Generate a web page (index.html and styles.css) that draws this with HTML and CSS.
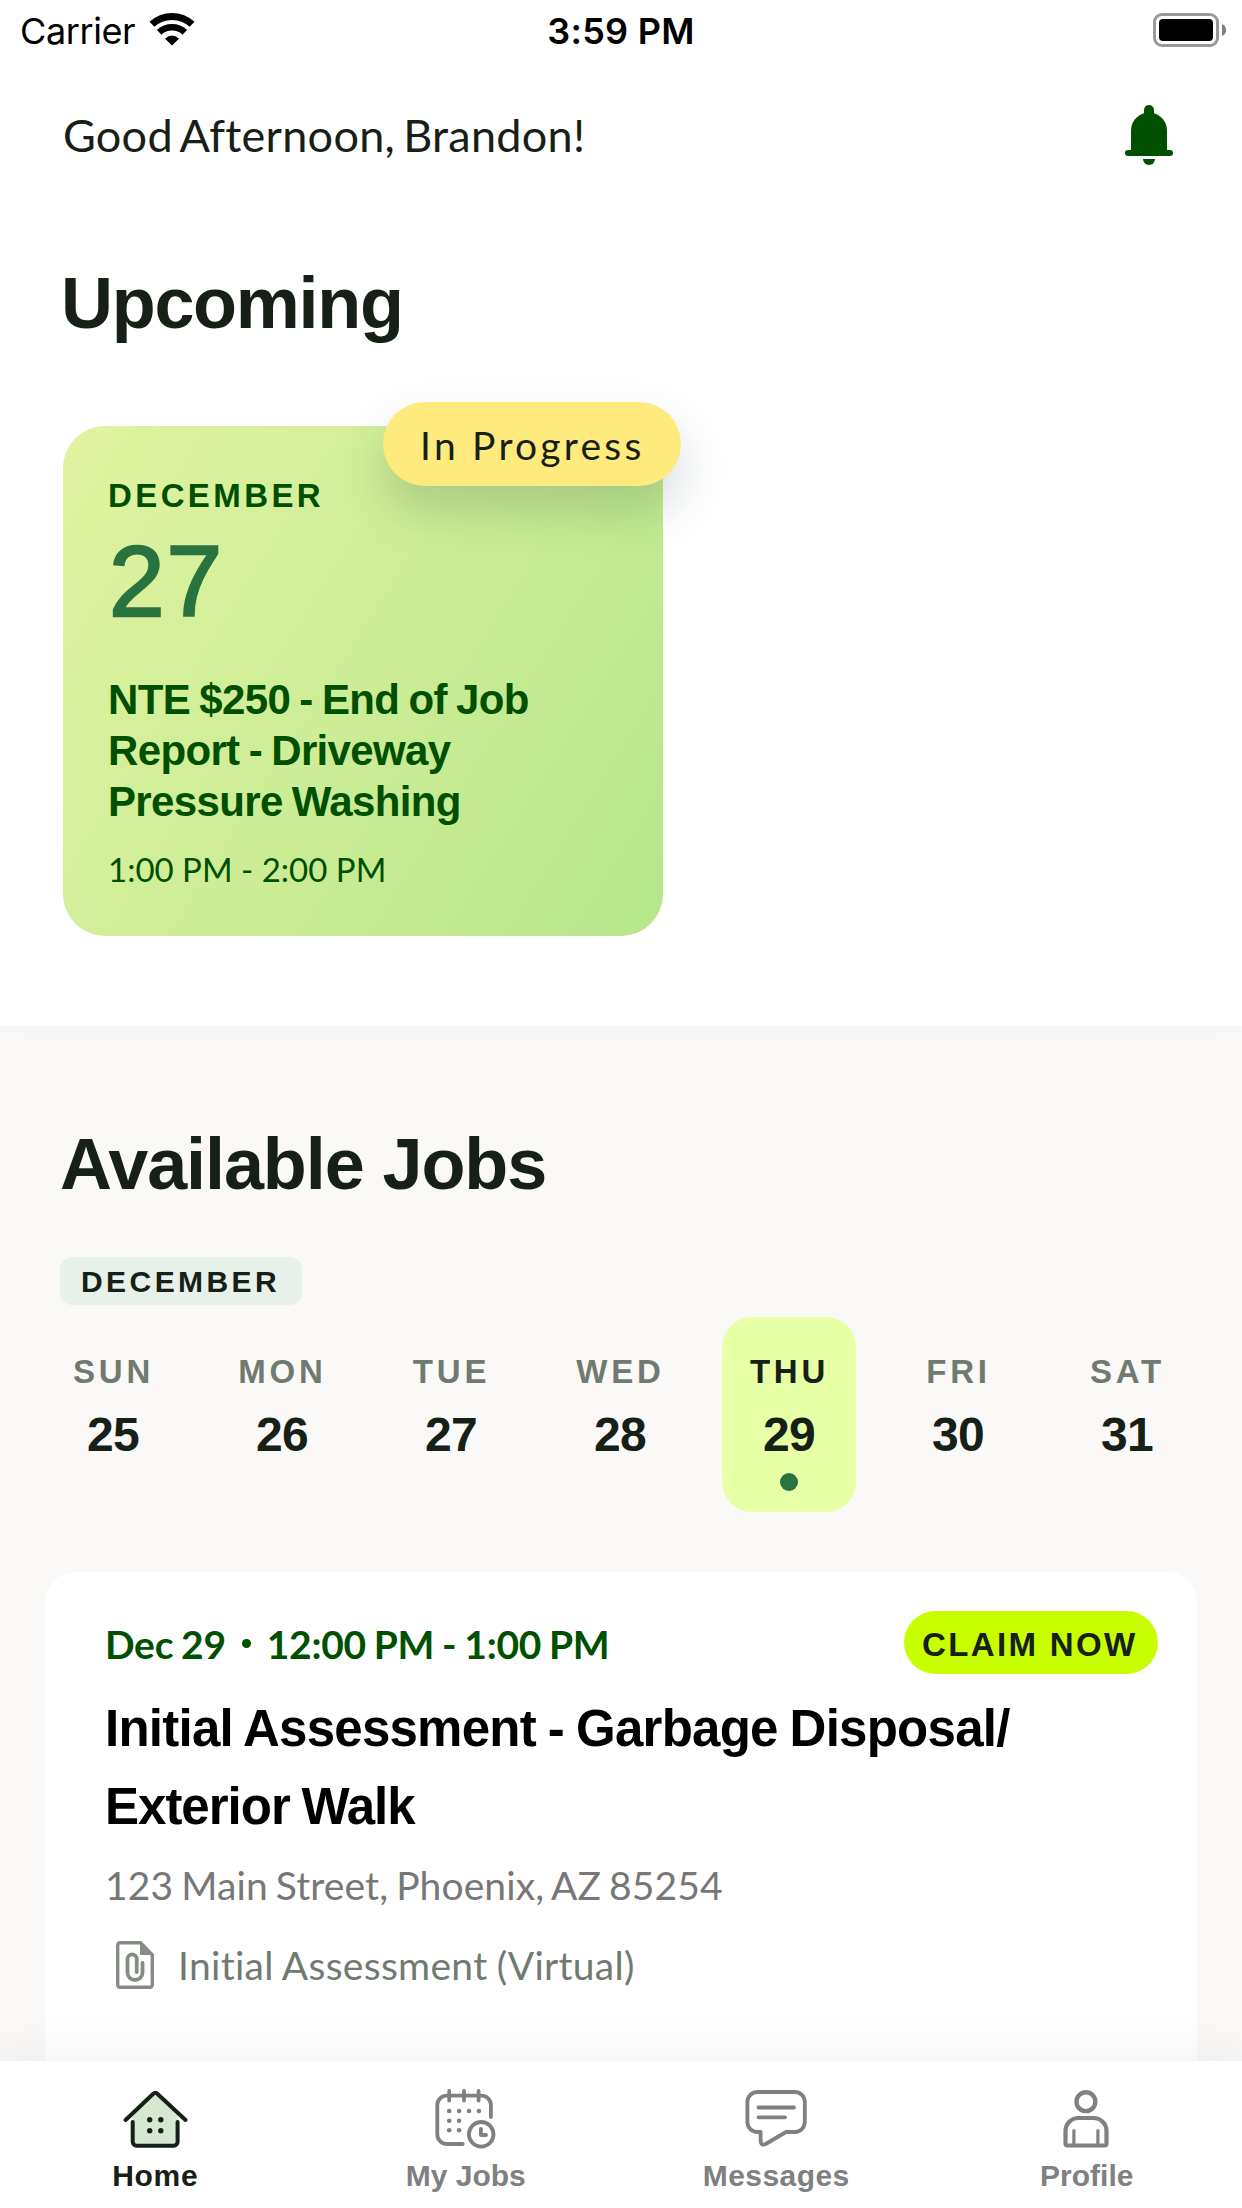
FILE: index.html
```html
<!DOCTYPE html>
<html lang="en">
<head>
<meta charset="utf-8">
<title>Home</title>
<link rel="stylesheet" href="styles.css">
</head>
<body>
<div class="screen">
  <main class="content">
    <section class="upcoming">
      <div class="status-bar">
        <div class="carrier">
          <span>Carrier</span>
          <svg class="wifi" width="46" height="34" viewBox="0 0 46 34">
            <path d="M2.9 12.3A29.5 29.5 0 0 1 43.1 12.3" fill="none" stroke="#000" stroke-width="7"/>
            <path d="M10.2 20.3A18.7 18.7 0 0 1 35.8 20.3" fill="none" stroke="#000" stroke-width="6.6"/>
            <path d="M23 33.6L16 26.8Q23 20.4 30 26.8Z" fill="#000"/>
          </svg>
        </div>
        <span class="clock">3:59 PM</span>
        <svg class="battery" width="73" height="34" viewBox="0 0 73 34">
          <rect x="1.5" y="1.5" width="63" height="31" rx="7.5" fill="none" stroke="#999" stroke-width="3"/>
          <rect x="6" y="6" width="54" height="22" rx="4" fill="#000"/>
          <path d="M69 11Q73 12.500 73 17T69 23Z" fill="#808080"/>
        </svg>
      </div>
      <header class="greeting-row">
        <p class="greeting">Good Afternoon, Brandon!</p>
        <svg class="bell" width="48" height="60" viewBox="0 0 48 60">
          <path d="M19 8.200V5a5 5 0 0 1 10 0v3.200A18 18 0 0 1 42 25V45h3a3 3 0 0 1 0 6H3a3 3 0 0 1 0-6h3V25A18 18 0 0 1 19 8.200Z"/>
          <path d="M18 54h12a6 6 0 0 1-12 0Z"/>
        </svg>
      </header>
      <h1 class="heading">Upcoming</h1>
      <article class="job-tile">
        <span class="status-pill">In Progress</span>
        <p class="tile-month">DECEMBER</p>
        <p class="tile-day">27</p>
        <h2 class="tile-title">NTE $250 - End of Job<br>Report - Driveway<br>Pressure Washing</h2>
        <p class="tile-time">1:00 PM - 2:00 PM</p>
      </article>
    </section>
    <section class="available">
      <h1 class="heading heading-jobs">Available Jobs</h1>
      <span class="month-chip">DECEMBER</span>
      <div class="week">
        <div class="day"><span class="day-name">SUN</span><span class="day-number">25</span></div>
        <div class="day"><span class="day-name">MON</span><span class="day-number">26</span></div>
        <div class="day"><span class="day-name">TUE</span><span class="day-number">27</span></div>
        <div class="day"><span class="day-name">WED</span><span class="day-number">28</span></div>
        <div class="day selected"><span class="day-name">THU</span><span class="day-number">29</span><i class="day-dot"></i></div>
        <div class="day"><span class="day-name">FRI</span><span class="day-number">30</span></div>
        <div class="day"><span class="day-name">SAT</span><span class="day-number">31</span></div>
      </div>
      <article class="job-card">
        <div class="job-top">
          <p class="job-date"><span>Dec 29</span><i class="bullet"></i><span>12:00 PM - 1:00 PM</span></p>
          <button class="claim">CLAIM NOW</button>
        </div>
        <h2 class="job-title">Initial Assessment - Garbage Disposal/<br><span class="title-end">Exterior Walk</span></h2>
        <p class="job-address">123 Main Street, Phoenix, AZ 85254</p>
        <p class="job-type">
          <svg width="38" height="48" viewBox="0 0 38 48" fill="none" stroke="#858c84" stroke-width="3.400" stroke-linecap="round" stroke-linejoin="round">
            <path d="M4 1.700H24.500L36.300 14V44a2.300 2.300 0 0 1-2.300 2.300H4A2.300 2.300 0 0 1 1.700 44V4A2.300 2.300 0 0 1 4 1.700Z"/>
            <path d="M24.500 2V13.500H36Z" fill="#858c84" stroke-width="1"/>
            <path d="M26.500 22V31.500a7.500 7.500 0 0 1-15 0V18a4.600 4.600 0 0 1 9.200 0V31" stroke-width="3.800"/>
          </svg>
          <span>Initial Assessment (Virtual)</span>
        </p>
      </article>
    </section>
  </main>
  <nav class="tabs">
    <a class="tab active">
      <svg width="66" height="66" viewBox="0 0 66 66" fill="none" stroke="#162016" stroke-width="4" stroke-linecap="round" stroke-linejoin="round">
        <path d="M10.700 58V28L33.300 6L55.600 28V58Z" fill="#d6e8d2" stroke="none"/>
        <path d="M3.600 33L31 7Q33.300 4.600 35.600 7L63.500 33"/>
        <path d="M10.700 35V54.700a4 4 0 0 0 4 4H51.600a4 4 0 0 0 4-4V35"/>
        <g fill="#162016" stroke="none"><circle cx="27.700" cy="32.700" r="2.700"/><circle cx="38.800" cy="32.700" r="2.700"/><circle cx="27.700" cy="43.700" r="2.700"/><circle cx="38.800" cy="43.700" r="2.700"/></g>
      </svg>
      <span class="tab-home">Home</span>
    </a>
    <a class="tab">
      <svg width="66" height="66" viewBox="0 0 66 66" fill="none" stroke="#808080" stroke-width="3.800" stroke-linecap="round" stroke-linejoin="round">
        <path d="M57.900 30V18a9.500 9.500 0 0 0-9.500-9.300H13.800A9.500 9.500 0 0 0 4.300 18V47.500A9.500 9.500 0 0 0 13.800 57H29.600"/>
        <path d="M16.200 3.900V13.500M31 3.900V13.500M45.600 3.900V13.500"/>
        <g fill="#808080" stroke="none"><circle cx="16.200" cy="24" r="2.300"/><circle cx="26.100" cy="24" r="2.300"/><circle cx="36" cy="24" r="2.300"/><circle cx="45.900" cy="24" r="2.300"/><circle cx="16.200" cy="33.700" r="2.300"/><circle cx="26.100" cy="33.700" r="2.300"/><circle cx="16.200" cy="43.300" r="2.300"/><circle cx="26.100" cy="43.300" r="2.300"/></g>
        <circle cx="48.200" cy="47.300" r="12.300"/>
        <path d="M47.900 41.800V48H53"/>
      </svg>
      <span>My Jobs</span>
    </a>
    <a class="tab">
      <svg width="66" height="66" viewBox="0 0 66 66" fill="none" stroke="#808080" stroke-width="3.800" stroke-linecap="round" stroke-linejoin="round">
        <path d="M14.400 5H51.800a10 10 0 0 1 10 10V35a10 10 0 0 1-10 10H43L23.500 56.500Q17.600 60 17.600 53V45H14.400a10 10 0 0 1-10-10V15a10 10 0 0 1 10-10Z"/>
        <path d="M15.500 20.500H51M15.500 30.300H42"/>
      </svg>
      <span class="tab-messages">Messages</span>
    </a>
    <a class="tab">
      <svg width="66" height="66" viewBox="0 0 66 66" fill="none" stroke="#808080" stroke-width="4.400" stroke-linecap="round" stroke-linejoin="round">
        <circle cx="31.900" cy="14.700" r="9.400"/>
        <path d="M11.500 44A13 13 0 0 1 24.500 31H39.500A13 13 0 0 1 52.500 44V56.500a2 2 0 0 1-2 2H13.500a2 2 0 0 1-2-2Z" stroke-width="4.200"/>
        <path d="M19.900 43.500V58M43.900 43.500V58" stroke-width="3.200"/>
      </svg>
      <span>Profile</span>
    </a>
  </nav>
</div>
</body>
</html>
```
FILE: styles.css
```css
* {
  box-sizing: border-box;
}

body,
h1,
h2,
p {
  margin: 0;
}

body {
  background: #fff;
  color: #162016;
  font-family: "Liberation Sans", Arial, sans-serif;
}

.screen {
  display: flex;
  flex-direction: column;
  width: 1242px;
  height: 2208px;
  overflow: hidden;
}

.content {
  flex: 1;
  min-height: 0;
  display: flex;
  flex-direction: column;
}

/* Upcoming */
.upcoming {
  position: relative;
  flex: none;
  height: 1026px;
  background: #fff;
  box-shadow: 0 0 24px rgba(0, 0, 0, 0.03);
}

.status-bar {
  display: grid;
  grid-template-columns: 1fr auto 1fr;
  align-items: center;
  height: 60px;
  padding: 2px 16px 0 20px;
  color: #000;
  font: 36px/58px Inter, sans-serif;
}

.carrier {
  display: flex;
  align-items: center;
  gap: 14px;
  letter-spacing: -0.4px;
}

.wifi {
  margin-top: -4px;
}

.clock {
  margin-right: 4px;
  font-weight: 600;
  letter-spacing: 0.3px;
}

.battery {
  justify-self: end;
  margin-top: -2px;
}

.greeting-row {
  display: flex;
  align-items: center;
  justify-content: space-between;
  height: 60px;
  margin-top: 45px;
  padding: 0 69px 0 63px;
}

.greeting {
  font: 45px/54px Lato, sans-serif;
  letter-spacing: 0.25px;
  word-spacing: -3.5px;
}

.bell {
  fill: #005000;
}

.heading {
  margin: 95px 0 0 61px;
  font-size: 72px;
  line-height: 86px;
  letter-spacing: -1.3px;
}

.job-tile {
  position: relative;
  width: 600px;
  height: 510px;
  margin: 80px 0 0 63px;
  padding: 50px 45px 0;
  border-radius: 42px;
  background: linear-gradient(122deg, #e2f3a0, #b6e68b);
  color: #005000;
}

.status-pill {
  position: absolute;
  top: -24px;
  left: 320px;
  width: 298px;
  height: 84px;
  padding-left: 37px;
  border-radius: 42px;
  background: #ffeb7d;
  box-shadow: 0 24px 48px rgba(22, 64, 48, 0.19);
  color: #162016;
  font: 39px/86px Lato, sans-serif;
  letter-spacing: 3.25px;
  white-space: nowrap;
}

.tile-month {
  font-size: 33px;
  font-weight: 700;
  line-height: 40px;
  letter-spacing: 3.4px;
}

.tile-day {
  margin: 5px 0 0 1px;
  color: #297340;
  font-size: 100px;
  line-height: 120px;
  letter-spacing: 2px;
  -webkit-text-stroke: 2.4px #297340;
}

.tile-title {
  margin-top: 33px;
  font-size: 42px;
  line-height: 51px;
  letter-spacing: -0.65px;
  word-spacing: -1.8px;
  white-space: nowrap;
}

.tile-time {
  margin-top: 22px;
  font: 33px/40px Lato, sans-serif;
}

/* Available jobs */
.available {
  flex: 1;
  min-height: 0;
  display: flex;
  flex-direction: column;
  background: #fbf9f8;
}

.heading-jobs {
  margin-left: 60px;
  letter-spacing: -1.1px;
}

.month-chip {
  align-self: flex-start;
  width: 242px;
  height: 48px;
  margin: 50px 0 0 60px;
  padding-left: 21px;
  border-radius: 12px;
  background: #e7f1ea;
  font-size: 30px;
  font-weight: 700;
  line-height: 49px;
  letter-spacing: 3.43px;
}

.week {
  display: grid;
  grid-template-columns: repeat(7, 169px);
  justify-items: center;
  margin: 12px 0 0 28.5px;
}

.day {
  display: flex;
  flex-direction: column;
  align-items: center;
  width: 134px;
  height: 195px;
  padding-top: 35px;
  border-radius: 30px;
  font-weight: 700;
}

.day-name {
  color: #717a70;
  font-size: 33px;
  line-height: 40px;
  letter-spacing: 3.8px;
  text-indent: 1px;
}

.day-number {
  margin-top: 14px;
  font-size: 48px;
  line-height: 58px;
  letter-spacing: -0.6px;
}

.selected {
  background: #e7ffa5;
}

.selected .day-name {
  color: #162016;
}

.day-dot {
  width: 18px;
  height: 18px;
  margin-top: 9px;
  border-radius: 50%;
  background: #297340;
}

.job-card {
  flex: none;
  height: 600px;
  margin: 60px 45px 0;
  padding: 39px 39px 0 60px;
  border-radius: 30px;
  background: #fff;
}

.job-top {
  display: flex;
  align-items: center;
  justify-content: space-between;
}

.job-date {
  display: flex;
  align-items: center;
  padding-top: 3px;
  color: #005000;
  font: 700 39px/48px Lato, sans-serif;
  letter-spacing: -0.3px;
  word-spacing: -1.2px;
}

.bullet {
  width: 9px;
  height: 9px;
  margin: 0 16px 2px 16px;
  border-radius: 50%;
  background: #005000;
}

.claim {
  width: 254px;
  height: 63px;
  padding: 4px 0 0 18px;
  border: 0;
  border-radius: 32px;
  background: #c8ff00;
  color: #162016;
  font: 700 33px/59px "Liberation Sans", Arial, sans-serif;
  letter-spacing: 2.36px;
  text-align: left;
  white-space: nowrap;
}

.job-title {
  margin-top: 16px;
  color: #000;
  font-size: 51px;
  line-height: 78px;
  letter-spacing: -0.75px;
  word-spacing: -1.5px;
  white-space: nowrap;
}

.title-end {
  letter-spacing: -1px;
}

.job-address {
  margin-top: 12px;
  color: #777;
  font: 39px/54px Lato, sans-serif;
  letter-spacing: 0.1px;
  word-spacing: -2px;
}

.job-type {
  display: flex;
  align-items: center;
  gap: 24px;
  margin: 23px 0 0 11px;
  color: #717a70;
  font: 39px/60px Lato, sans-serif;
  letter-spacing: 0.3px;
  word-spacing: -1px;
}

/* Tab bar */
.tabs {
  position: relative;
  flex: none;
  display: grid;
  grid-template-columns: repeat(4, 1fr);
  height: 147px;
  background: #fff;
  box-shadow: 0 0 60px rgba(0, 0, 0, 0.07);
}

.tab {
  display: flex;
  flex-direction: column;
  align-items: center;
  gap: 5px;
  padding-top: 26px;
  color: #808080;
  font-size: 30px;
  font-weight: 700;
  line-height: 36px;
}

.active {
  color: #162016;
}

.tab-home {
  letter-spacing: 0.7px;
}

.tab-messages {
  letter-spacing: 0.45px;
}
```
